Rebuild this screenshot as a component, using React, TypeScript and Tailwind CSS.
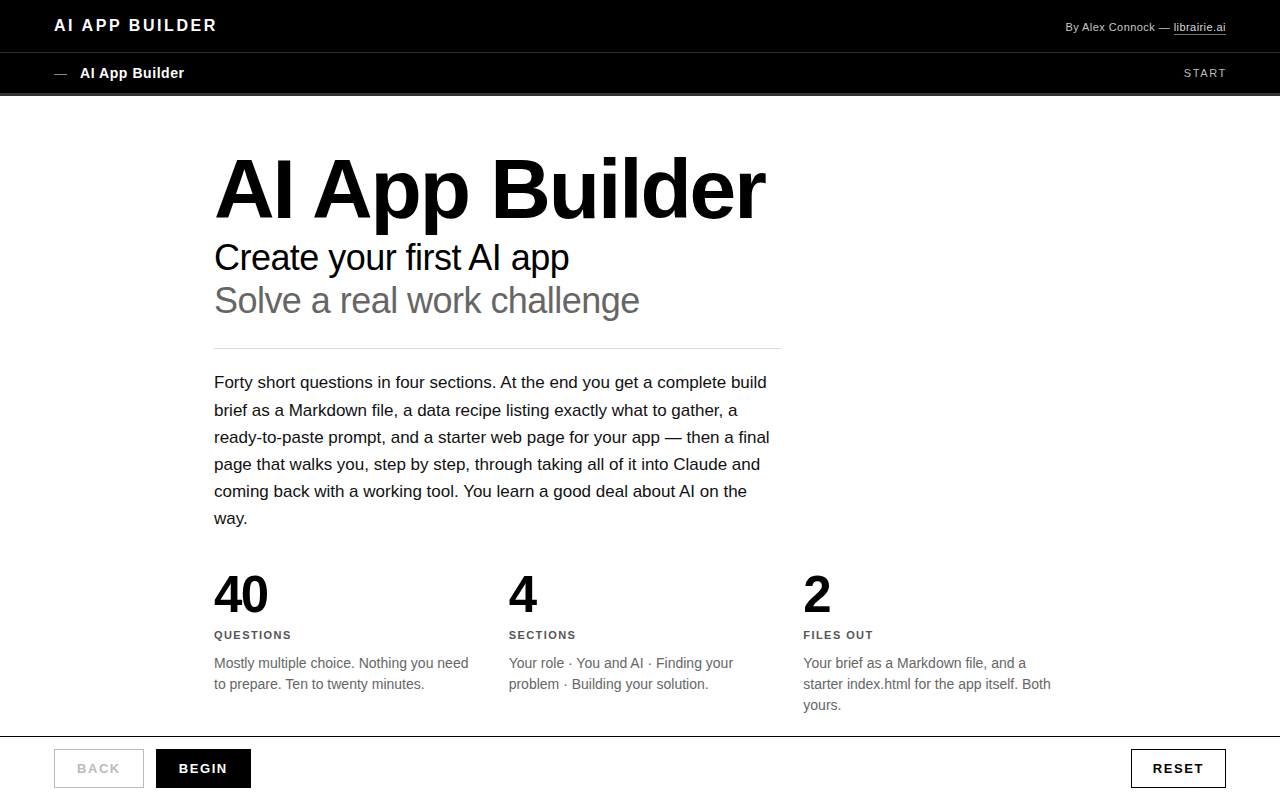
import React from 'react';

const stats = [
  {
    value: '40',
    label: 'Questions',
    text: 'Mostly multiple choice. Nothing you need to prepare. Ten to twenty minutes.',
  },
  {
    value: '4',
    label: 'Sections',
    text: 'Your role · You and AI · Finding your problem · Building your solution.',
  },
  {
    value: '2',
    label: 'Files out',
    text: 'Your brief as a Markdown file, and a starter index.html for the app itself. Both yours.',
  },
];

const App: React.FC = () => {
  return (
    <div
      className="h-screen flex flex-col bg-white text-[#111]"
      style={{ fontFamily: '"Liberation Sans", Arial, Helvetica, sans-serif' }}
    >
      <header className="bg-black text-white">
        <div className="h-[53px] px-[54px] flex items-center justify-between border-b border-[#2e2e2e]">
          <div className="text-[16px] font-bold tracking-[0.16em] leading-none">AI APP BUILDER</div>
          <div className="text-[11px] tracking-[0.04em] text-[#c8c8c8] leading-none pt-[2px]">
            By Alex Connock —{' '}
            <a href="#" className="text-[#d8d8d8] border-b border-[#777] pb-[1px]">
              librairie.ai
            </a>
          </div>
        </div>
        <div className="h-[43px] px-[54px] flex items-center justify-between border-b-[3px] border-[#333]">
          <div className="flex items-center gap-[13px] leading-none">
            <span className="text-[#888] text-[13px]">—</span>
            <span className="text-[14px] font-bold tracking-[0.04em]">AI App Builder</span>
          </div>
          <div className="text-[11px] tracking-[0.15em] text-[#bbb] leading-none -mr-[1px]">START</div>
        </div>
      </header>

      <main className="flex-1 overflow-hidden">
        <div className="w-[852px] mx-auto pt-[51px]">
          <h1 className="text-[84px] font-bold leading-none tracking-[-0.025em] text-black">AI App Builder</h1>
          <div className="mt-[5px] text-[36px] leading-[1.2] tracking-[-0.015em]">
            <div className="text-black">Create your first AI app</div>
            <div className="text-[#666]">Solve a real work challenge</div>
          </div>
          <div className="w-[567px] border-t border-[#ddd] mt-[26px]" />
          <p className="w-[568px] mt-[20px] text-[17px] leading-[1.6] text-[#111]">
            Forty short questions in four sections. At the end you get a complete build brief as a Markdown file, a
            data recipe listing exactly what to gather, a ready-to-paste prompt, and a starter web page for your app —
            then a final page that walks you, step by step, through taking all of it into Claude and coming back with
            a working tool. You learn a good deal about AI on the way.
          </p>
          <div className="mt-[36px] grid grid-cols-3 gap-8">
            {stats.map((s) => (
              <div key={s.label}>
                <div className="text-[51px] font-bold leading-none tracking-[-0.03em] text-black">{s.value}</div>
                <div className="mt-[8px] text-[11px] font-bold uppercase tracking-[0.13em] leading-[1.4] text-[#555]">
                  {s.label}
                </div>
                <p className="mt-[10px] text-[14px] leading-[1.5] text-[#666]">{s.text}</p>
              </div>
            ))}
          </div>
        </div>
      </main>

      <footer className="border-t border-black px-[54px] py-3 flex items-center justify-between">
        <div className="flex items-center gap-3">
          <button className="h-[39px] px-[22px] border border-[#bbb] text-[#bbb] text-[13px] font-bold tracking-[0.12em] bg-white">
            BACK
          </button>
          <button className="h-[39px] px-[22px] border border-black bg-black text-white text-[13px] font-bold tracking-[0.12em]">
            BEGIN
          </button>
        </div>
        <button className="h-[39px] px-[21px] border border-black text-black text-[13px] font-bold tracking-[0.12em] bg-white">
          RESET
        </button>
      </footer>
    </div>
  );
};

export default App;
